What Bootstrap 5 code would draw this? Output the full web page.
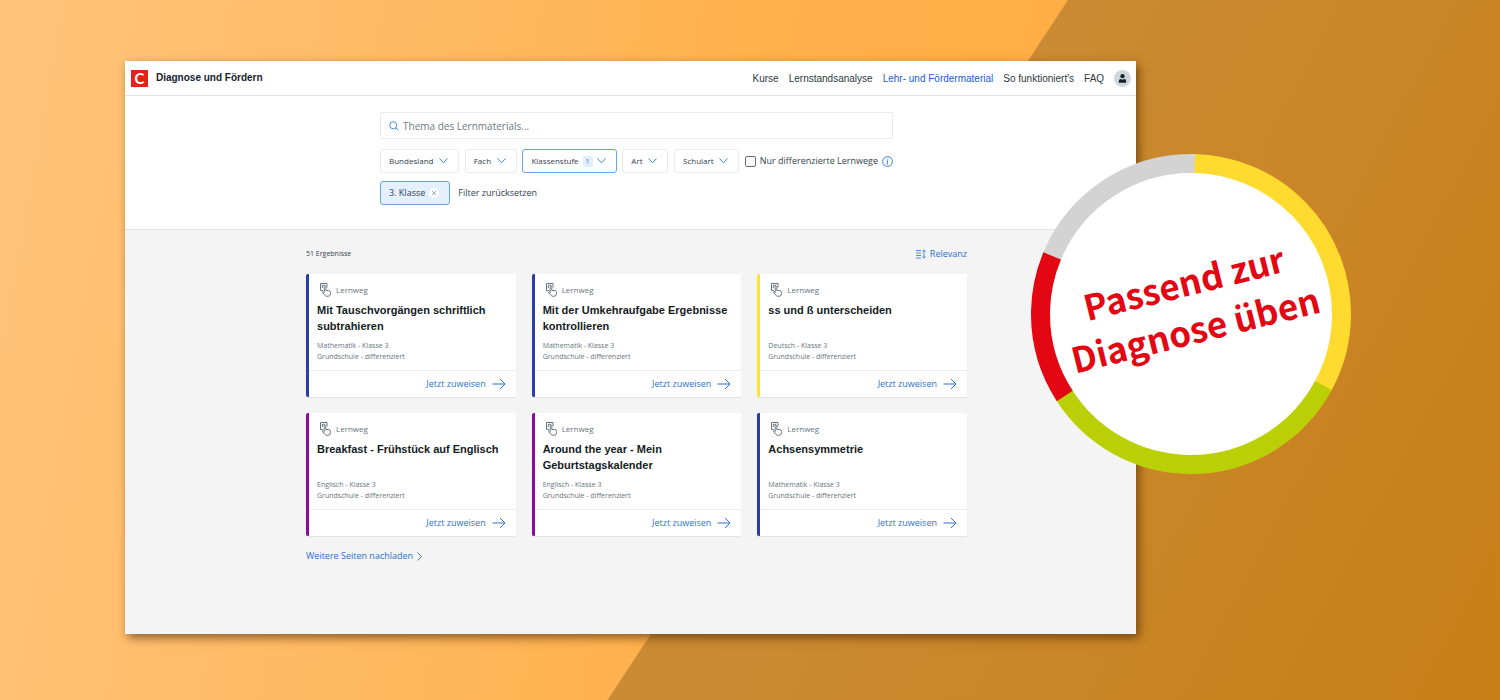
<!DOCTYPE html>
<html lang="de">
<head>
<meta charset="utf-8">
<meta name="viewport" content="width=device-width, initial-scale=1">
<title>Diagnose und Fördern</title>
<link href="https://cdn.jsdelivr.net/npm/bootstrap@5.3.0/dist/css/bootstrap.min.css" rel="stylesheet">
<style>
  :root { --link: #2a72cf; --ink: #33424c; --muted-ink: #66747d; --line: #e9eaec; }
  body { font-family: "Open Sans", "Noto Sans", sans-serif; font-size: 9px; line-height: 16px; color: var(--ink); }
  a { color: var(--link); text-decoration: none; }
  svg { display: block; flex: none; fill: none; stroke: currentColor; }
  .stage { position: relative; z-index: 0; min-height: 100vh; padding: 61px 24.26% 66px 8.33%;
    background: linear-gradient(100deg, #ffc47c 0%, #ffb04a 50%, #ffa93e 100%); overflow: hidden; }
  .stage::before { content: ""; position: absolute; inset: 0; z-index: -1;
    background: linear-gradient(118deg, #cd8f3c 30%, #cb8a30 60%, #c87e18 100%);
    clip-path: polygon(71.2% 0, 100% 0, 100% 100%, 40.5% 100%); }
  .app { position: relative; flex: 1; background: #f4f4f4; box-shadow: 3px 4px 9px rgba(70, 35, 0, .6); }
  .topbar { min-height: 35px; padding: 0 5px 0 6px; border-bottom: 1px solid #dfe1e5; font-family: "Liberation Sans", Arial, sans-serif; font-size: 10px; }
  .brand { color: #14222b; font-weight: 700; }
  .topbar .nav { gap: 10px; }
  .topbar .nav-link { padding: 1px 0 0; color: #2b3942; }
  .topbar .nav-link.active { color: #1a5dcc; }
  .avatar { stroke: none; }
  .logo { width: 17px; height: 17px; background: #e2231a; color: #fff; font: 700 15px/17px Lato, sans-serif; text-align: center; }
  .finder { min-height: 134px; padding: 16px 0 24px 12px; border-bottom: 1px solid #e2e3e5; }
  .finder-inner { max-width: 513px; }
  .searchbox { height: 27px; padding: 0 8px; border: 1px solid var(--line); border-radius: 2px; }
  .searchbox .form-control { font-size: 10px; line-height: 16px; color: var(--ink); }
  .searchbox .form-control::placeholder { color: #6b7a83; opacity: 1; }
  .blue { color: #3684dc; }
  .filters { margin-top: 10px; }
  .filter { height: 24px; padding: 0 10px 0 8px; border: 1px solid var(--line); border-radius: 3px; background-color: #fff; color: var(--ink); font-size: 8px; line-height: 16px; }
  select.filter { padding-right: 24px; background-position: right 10px center; background-size: 9px 6px;
    background-image: url("data:image/svg+xml,%3Csvg xmlns='http://www.w3.org/2000/svg' viewBox='0 0 9 6' fill='none' stroke='%233684dc' stroke-linecap='round' stroke-linejoin='round'%3E%3Cpath d='M.7.8 4.5 4.8 8.3.8'/%3E%3C/svg%3E"); }
  .filter.picked { border-color: #67a5e2; }
  .count { padding: 0 3px; border-radius: 2px; background: #e1eefc; color: #3684dc; font-size: 7px; line-height: 11px; }
  .chip { background: #e4f0fd; font-size: 9px; }
  .chip-x { width: 10px; height: 10px; border-radius: 50%; background: #fff; color: #7d97b0; }
  .reset { border: 0; padding: 0; background: none; color: var(--ink); font-size: 9px; }
  .only-diff .form-check-input { width: 11px; height: 11px; margin: 0; border: 1px solid #6d6d6d; border-radius: 2px; }
  .results { padding: 16px 0 32px 12px; }
  .results-inner { max-width: 661px; }
  .tally { font-size: 7px; }
  .tiles { --bs-gutter-x: 16px; --bs-gutter-y: 16px; }
  .tile { border: 0; border-left: 3px solid var(--subject); border-radius: 2px 0 0 2px; box-shadow: 0 1px 1px #e2e2e2; }
  .math { --subject: #2b3dab; }
  .german { --subject: #ffe62e; }
  .english { --subject: #8d0aa0; }
  .tile .card-body { padding: 8px; }
  .kind { padding-left: 3px; color: var(--muted-ink); font-size: 8px; }
  .tile h2 { margin: 4px 0 6px; min-height: 32px; color: #131c22; font: 700 11px/16px "Liberation Sans", Arial, sans-serif; }
  .meta { color: var(--muted-ink); font-size: 7px; line-height: 11px; }
  .tile .card-footer { padding: 5px 10px; border-top: 1px solid #ebecee; background: #fff; border-radius: 0; }
  .assign { gap: 6px; }
  .sticker { position: absolute; top: 93px; right: -215px; width: 320px; height: 320px; padding: 0 4px 18px 0; }
  .sticker p { transform: rotate(-14deg); color: #e30613; font: 700 35px/48px "Noto Sans CJK SC", sans-serif; }
</style>
</head>
<body>
<svg class="d-none" aria-hidden="true">
  <symbol id="tap" viewBox="0 0 12 14"><path d="M2.800 7.500H.5V.5h6.500v4M4.200 9.500V4.300q0-.9.800-.9t.8.900v3.200h2.700q2 .1 2 2v1.200q0 2.600-2.600 2.600H6.800q-1 0-1.600-.8L2.600 9.600q-.3-.9.500-.9.500 0 1.100.8M2.300 5V2.300h3"/></symbol>
  <symbol id="arrow" viewBox="0 0 14 12"><path d="M.5 6h12.500M8 1l5 5-5 5"/></symbol>
</svg>
<div class="stage d-flex">
  <div class="app">
    <header class="topbar d-flex align-items-center bg-white">
      <a class="brand d-flex align-items-center" href="#"><span class="logo me-2">C</span>Diagnose und Fördern</a>
      <nav class="nav ms-auto align-items-center">
        <a class="nav-link" href="#">Kurse</a>
        <a class="nav-link" href="#">Lernstandsanalyse</a>
        <a class="nav-link active" href="#">Lehr- und Fördermaterial</a>
        <a class="nav-link" href="#">So funktioniert's</a>
        <a class="nav-link" href="#">FAQ</a>
        <a class="nav-link" href="#" aria-label="Profil"><svg class="avatar" width="17" height="17" viewBox="0 0 17 17"><circle cx="8.500" cy="8.500" r="8.500" fill="#cfd7dd"/><circle cx="8.500" cy="6.200" r="2.100" fill="#14222b"/><path d="M4.800 12.800V11q0-2 2-2l1.700.8 1.700-.8q2 0 2 2v1.800z" fill="#14222b"/></svg></a>
      </nav>
    </header>
    <section class="finder bg-white">
      <div class="finder-inner mx-auto">
        <div class="searchbox d-flex align-items-center">
          <svg class="blue me-1" width="10" height="10" viewBox="0 0 11 11"><circle cx="4.700" cy="4.700" r="3.900"/><path d="m7.400 7.400 3 3"/></svg>
          <input class="form-control border-0 p-0 shadow-none" type="search" placeholder="Thema des Lernmaterials..." aria-label="Thema des Lernmaterials">
        </div>
        <div class="filters d-flex align-items-center justify-content-between">
          <select class="form-select filter w-auto" aria-label="Bundesland"><option>Bundesland</option></select>
          <select class="form-select filter w-auto" aria-label="Fach"><option>Fach</option></select>
          <button class="filter picked d-flex align-items-center gap-1" type="button" aria-haspopup="listbox">Klassenstufe <span class="count">1</span><svg class="blue" width="9" height="6" viewBox="0 0 9 6" stroke-linecap="round" stroke-linejoin="round"><path d="M.7.8 4.500 4.800 8.300.8"/></svg></button>
          <select class="form-select filter w-auto" aria-label="Art"><option>Art</option></select>
          <select class="form-select filter w-auto" aria-label="Schulart"><option>Schulart</option></select>
          <div class="only-diff d-flex align-items-center gap-1">
            <input class="form-check-input" type="checkbox" id="diff">
            <label class="text-nowrap" for="diff">Nur differenzierte Lernwege</label>
            <svg class="blue" width="11" height="11" viewBox="0 0 11 11"><circle cx="5.500" cy="5.500" r="4.900"/><path d="M5.800 2.500v1M4.700 4.700h.9L5 8.200h.9"/></svg>
          </div>
        </div>
        <div class="d-flex align-items-center gap-2 mt-2">
          <button class="filter picked chip d-flex align-items-center gap-1" type="button">3. Klasse <span class="chip-x"><svg width="10" height="10" viewBox="0 0 10 10" stroke-width=".8"><path d="m3 3 4 4M7 3 3 7"/></svg></span></button>
          <button class="reset" type="button">Filter zurücksetzen</button>
        </div>
      </div>
    </section>
    <main class="results">
      <div class="results-inner mx-auto">
        <div class="d-flex align-items-center justify-content-between mb-2 pb-1">
          <span class="tally">51 Ergebnisse</span>
          <a class="d-flex align-items-center gap-1" href="#"><svg class="blue" width="10" height="10" viewBox="0 0 10 10"><path d="M0 1.500h5M0 4h5M0 6.500h5M0 9h5M8 1v8M6.500 2.500 8 .8l1.500 1.700M6.500 7.500 8 9.200l1.500-1.700" stroke-width=".9"/></svg>Relevanz</a>
        </div>
        <div class="tiles row row-cols-3">
          <div class="col"><article class="tile card math"><div class="card-body">
            <div class="kind d-flex align-items-center gap-1"><svg width="12" height="14"><use href="#tap"/></svg>Lernweg</div>
            <h2>Mit Tauschvorgängen schriftlich subtrahieren</h2>
            <div class="meta">Mathematik - Klasse 3<br>Grundschule - differenziert</div></div>
            <div class="card-footer d-flex justify-content-end"><a class="assign d-flex align-items-center" href="#">Jetzt zuweisen <svg width="14" height="12"><use href="#arrow"/></svg></a></div></article></div>
          <div class="col"><article class="tile card math"><div class="card-body">
            <div class="kind d-flex align-items-center gap-1"><svg width="12" height="14"><use href="#tap"/></svg>Lernweg</div>
            <h2>Mit der Umkehraufgabe Ergebnisse kontrollieren</h2>
            <div class="meta">Mathematik - Klasse 3<br>Grundschule - differenziert</div></div>
            <div class="card-footer d-flex justify-content-end"><a class="assign d-flex align-items-center" href="#">Jetzt zuweisen <svg width="14" height="12"><use href="#arrow"/></svg></a></div></article></div>
          <div class="col"><article class="tile card german"><div class="card-body">
            <div class="kind d-flex align-items-center gap-1"><svg width="12" height="14"><use href="#tap"/></svg>Lernweg</div>
            <h2>ss und ß unterscheiden</h2>
            <div class="meta">Deutsch - Klasse 3<br>Grundschule - differenziert</div></div>
            <div class="card-footer d-flex justify-content-end"><a class="assign d-flex align-items-center" href="#">Jetzt zuweisen <svg width="14" height="12"><use href="#arrow"/></svg></a></div></article></div>
          <div class="col"><article class="tile card english"><div class="card-body">
            <div class="kind d-flex align-items-center gap-1"><svg width="12" height="14"><use href="#tap"/></svg>Lernweg</div>
            <h2>Breakfast - Frühstück auf Englisch</h2>
            <div class="meta">Englisch - Klasse 3<br>Grundschule - differenziert</div></div>
            <div class="card-footer d-flex justify-content-end"><a class="assign d-flex align-items-center" href="#">Jetzt zuweisen <svg width="14" height="12"><use href="#arrow"/></svg></a></div></article></div>
          <div class="col"><article class="tile card english"><div class="card-body">
            <div class="kind d-flex align-items-center gap-1"><svg width="12" height="14"><use href="#tap"/></svg>Lernweg</div>
            <h2>Around the year - Mein Geburtstagskalender</h2>
            <div class="meta">Englisch - Klasse 3<br>Grundschule - differenziert</div></div>
            <div class="card-footer d-flex justify-content-end"><a class="assign d-flex align-items-center" href="#">Jetzt zuweisen <svg width="14" height="12"><use href="#arrow"/></svg></a></div></article></div>
          <div class="col"><article class="tile card math"><div class="card-body">
            <div class="kind d-flex align-items-center gap-1"><svg width="12" height="14"><use href="#tap"/></svg>Lernweg</div>
            <h2>Achsensymmetrie</h2>
            <div class="meta">Mathematik - Klasse 3<br>Grundschule - differenziert</div></div>
            <div class="card-footer d-flex justify-content-end"><a class="assign d-flex align-items-center" href="#">Jetzt zuweisen <svg width="14" height="12"><use href="#arrow"/></svg></a></div></article></div>
        </div>
        <a class="d-inline-flex align-items-center gap-1 mt-2 pt-1" href="#">Weitere Seiten nachladen <svg width="5" height="9" viewBox="0 0 5 9"><path d="m.5.5 4 4-4 4" stroke-width=".9"/></svg></a>
      </div>
    </main>
    <aside class="sticker d-flex align-items-center justify-content-center text-center">
      <svg class="position-absolute top-0 start-0" width="320" height="320" viewBox="0 0 320 320" aria-hidden="true">
        <circle cx="160" cy="160" r="150" fill="#fff" stroke="none"/>
        <g stroke-width="19" transform="rotate(-89 160 160)">
          <circle cx="160" cy="160" r="150.500" pathLength="360" stroke="#ffda2f" stroke-dasharray="117.700 360"/>
          <circle cx="160" cy="160" r="150.500" pathLength="360" stroke="#bacf05" stroke-dasharray="119 360" stroke-dashoffset="-117.400"/>
          <circle cx="160" cy="160" r="150.500" pathLength="360" stroke="#e30613" stroke-dasharray="55.900 360" stroke-dashoffset="-236"/>
        </g>
        <circle cx="160" cy="160" r="150.500" pathLength="360" stroke="#d3d3d3" stroke-width="19" stroke-dasharray="68.700 360" transform="rotate(-157.300 160 160)"/>
      </svg>
      <p class="position-relative text-nowrap mb-0">Passend zur<br>Diagnose üben</p>
    </aside>
  </div>
</div>
<script src="https://cdn.jsdelivr.net/npm/bootstrap@5.3.0/dist/js/bootstrap.bundle.min.js"></script>
</body>
</html>
